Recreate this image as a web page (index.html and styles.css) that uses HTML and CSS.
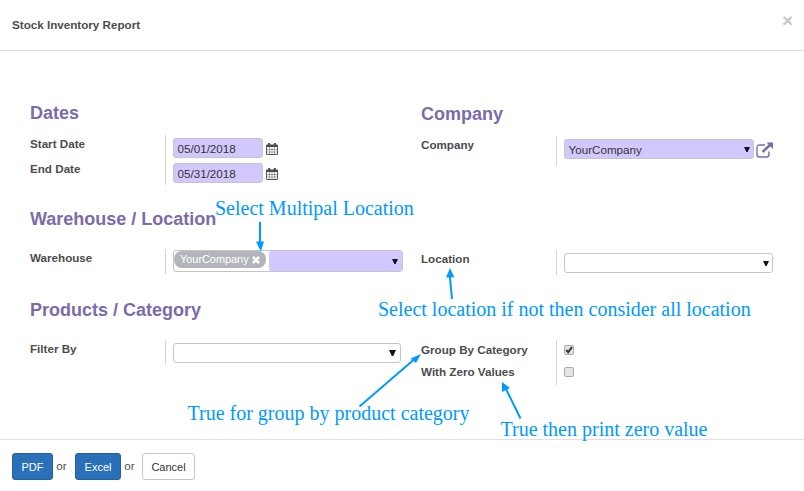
FILE: index.html
```html
<!DOCTYPE html>
<html lang="en">
<head>
<meta charset="utf-8">
<title>Stock Inventory Report</title>
<link rel="stylesheet" href="styles.css">
</head>
<body>
<svg class="defs" width="0" height="0">
  <symbol id="calendar" viewBox="0 0 12 12">
    <path d="M.5 2.5h11v9H.5z" fill="#fff" stroke="#5c5558"/>
    <path d="M0 2.500Q0 1.500 1 1.500H11Q12 1.500 12 2.500V4H0z" fill="#4c4c4c"/>
    <path d="M3.200 0v3M8.800 0v3" stroke="#4c4c4c" stroke-width="2"/>
    <path d="M3.500 4v8M6 4v8M8.500 4v8M0 6.500h12M0 9h12" stroke="#5c5558" stroke-width=".5"/>
  </symbol>
</svg>
<main class="dialog">
  <header class="header"><h1>Stock Inventory Report</h1><button class="close" aria-label="Close">×</button></header>
  <div class="body">
    <section class="group dates">
      <h2>Dates</h2>
      <div class="fields">
        <div class="row"><label>Start Date</label><div class="value"><span class="input date">05/01/2018</span><svg class="cal"><use href="#calendar"/></svg></div></div>
        <div class="row"><label>End Date</label><div class="value"><span class="input date">05/31/2018</span><svg class="cal"><use href="#calendar"/></svg></div></div>
      </div>
    </section>
    <section class="group company">
      <h2>Company</h2>
      <div class="fields">
        <div class="row"><label>Company</label><div class="value"><span class="input required">YourCompany<i class="caret"></i></span>
          <svg class="external" viewBox="0 0 18 16"><path d="M9 3H3.500Q1 3 1 5.500V12.500Q1 15 3.500 15H10.500Q13 15 13 12.500V9.500" fill="none" stroke="#7c6baa" stroke-width="1.400"/><path d="M6.500 10L14.500 2.500" stroke="#7c6baa" stroke-width="2.400"/><path d="M10.500 .500h6.500v6.500z" fill="#7c6baa"/></svg></div></div>
      </div>
    </section>
    <section class="group warehouse">
      <h2>Warehouse / Location</h2>
      <div class="fields">
        <div class="row"><label>Warehouse</label><div class="value"><div class="tags"><span class="tag">YourCompany<svg viewBox="0 0 8 8"><path d="M1 1l6 6M7 1L1 7" stroke="#fff" stroke-width="2.500"/></svg></span><span class="search"><i class="caret"></i></span></div></div></div>
      </div>
    </section>
    <section class="group location">
      <div class="fields">
        <div class="row"><label>Location</label><div class="value"><span class="input"><i class="caret"></i></span></div></div>
      </div>
    </section>
    <section class="group products">
      <h2>Products / Category</h2>
      <div class="fields">
        <div class="row"><label>Filter By</label><div class="value"><span class="input"><i class="caret"></i></span></div></div>
      </div>
    </section>
    <section class="group options">
      <div class="fields">
        <div class="row"><label>Group By Category</label><div class="value"><span class="check"><svg viewBox="0 0 10 10"><path d="M2.200 5l2 2.200L8 2.200" fill="none" stroke="#333" stroke-width="2"/></svg></span></div></div>
        <div class="row"><label>With Zero Values</label><div class="value"><span class="check"></span></div></div>
      </div>
    </section>
  </div>
  <footer class="footer"><button class="btn primary pdf">PDF</button><span>or</span><button class="btn primary excel">Excel</button><span>or</span><button class="btn cancel">Cancel</button></footer>
  <svg class="arrows" viewBox="0 0 804 491">
    <g stroke="#0099ff" stroke-width="2"><path d="M260 222v21M452 299l-2.200-23M359.500 406.500L414 359.500M520.500 418.500L506 389"/></g>
    <g fill="#0099ff"><path d="M256 241.500h8l-3.200 10zM446 277.500l4-9.500 4.300 9.300zM410.500 358.500l10.500-4.500-5 9zM502 382v10l8-4z"/></g>
  </svg>
  <p class="note n1">Select Multipal Location</p>
  <p class="note n2">Select location if not then consider all location</p>
  <p class="note n3">True for group by product category</p>
  <p class="note n4">True then print zero value</p>
</main>
</body>
</html>
```
FILE: styles.css
```css
* { box-sizing: border-box; }
body { margin: 0; background: #fff; color: #4c4c4c; font: 11.65px/16px "Liberation Sans", Arial, sans-serif; }
h1, h2, p { margin: 0; }
button { font: inherit; }
.defs { position: absolute; }
.dialog { position: relative; width: 804px; height: 491px; display: flex; flex-direction: column; overflow: hidden; }
.header { height: 51px; flex: none; display: flex; align-items: center; justify-content: space-between; padding: 0 11px 0 12px; border-bottom: 1px solid #e0e0e0; }
h1 { font-size: 11.65px; line-height: 16px; }
.close { border: 0; background: none; padding: 0; margin-top: -9px; font-size: 19px; line-height: 20px; font-weight: bold; color: #c8c8c8; }
.body { flex: none; height: 388px; padding: 52px 0 0 30px; display: grid; grid-template-columns: 391px 1fr; grid-template-rows: 106px 91px 1fr; }
h2 { color: #7c6baa; font-size: 18px; line-height: 20px; height: 32px; white-space: nowrap; }
.company { padding-top: 1px; }
.location { padding-top: 41px; }
.warehouse h2 { height: 40px; }
.products h2 { height: 40px; }
.options { padding-top: 40px; }
.row { display: grid; grid-template-columns: 135px 1fr; height: 25px; }
label { font-weight: bold; line-height: 18px; }
.value { border-left: 1px solid #d4d4d4; padding: 3px 0 0 7px; display: flex; align-items: flex-start; }
.input { position: relative; height: 20px; border: 1px solid #c5c5c5; border-radius: 3px; padding: 1px 4px 0 3.5px; line-height: 17px; color: #333; }
.date, .required { background: #d3c8fe; }
.date { width: 90px; }
.cal { width: 12px; height: 12px; margin: 5px 0 0 3px; }
.company .row { height: 30px; }
.company .input { width: 190px; }
.external { width: 18px; height: 16px; margin: 3px 0 0 2px; }
.caret { position: absolute; right: 3px; top: 7px; width: 6px; height: 5px; background: #111; clip-path: polygon(0 0, 100% 0, 60% 100%, 40% 100%); }
.tags { width: 230px; height: 22px; display: flex; border: 1px solid #c5c5c5; border-radius: 3px; }
.warehouse .value { padding-top: 1px; }
.tag { width: 92px; height: 17px; border-radius: 8px; background: #b2b6ba; color: #fff; font-size: 10.9px; line-height: 17px; padding-left: 6px; display: flex; align-items: center; }
.tag svg { width: 8px; height: 8px; margin-left: 3px; }
.search { position: relative; flex: 1; margin-left: 3px; background: #d3c8fe; border-radius: 2px; }
.search .caret { right: 4px; top: 8px; }
.location .input { width: 209px; }
.products .input { width: 228px; }
.products .caret { right: 4px; top: 6px; width: 7px; height: 6px; }
.options .row { height: 22px; }
.options .row + .row { height: 23px; }
.options label { line-height: 20px; }
.options .value { padding-top: 5px; }
.check { width: 10px; height: 10px; border: 1px solid #aaa; border-radius: 2px; background: #e4e4e4; }
.check svg { display: block; width: 10px; height: 10px; margin: -1px; }
.footer { height: 52px; border-top: 1px solid #e0e0e0; display: flex; align-items: flex-start; padding: 13px 0 0 12px; }
.footer span { line-height: 26px; padding-left: 3.2px; width: 22px; }
.btn { height: 27px; padding: 0; border: 1px solid #c5c5c5; border-radius: 3px; background: #fff; color: #333; font-size: 11px; line-height: 27px; }
.primary { background: #2a70b8; border-color: #24619f; color: #fff; }
.pdf { width: 41px; }
.excel { width: 46px; }
.cancel { width: 53px; margin-left: -1px; }
.arrows { position: absolute; inset: 0; width: 804px; height: 491px; pointer-events: none; }
.note { position: absolute; color: #0099ff; font: 20px/24px "Liberation Serif", "Times New Roman", serif; white-space: nowrap; }
.n1 { left: 215px; top: 196px; }
.n2 { left: 378px; top: 297px; }
.n3 { left: 187.5px; top: 401px; }
.n4 { left: 500.5px; top: 417px; }
```
